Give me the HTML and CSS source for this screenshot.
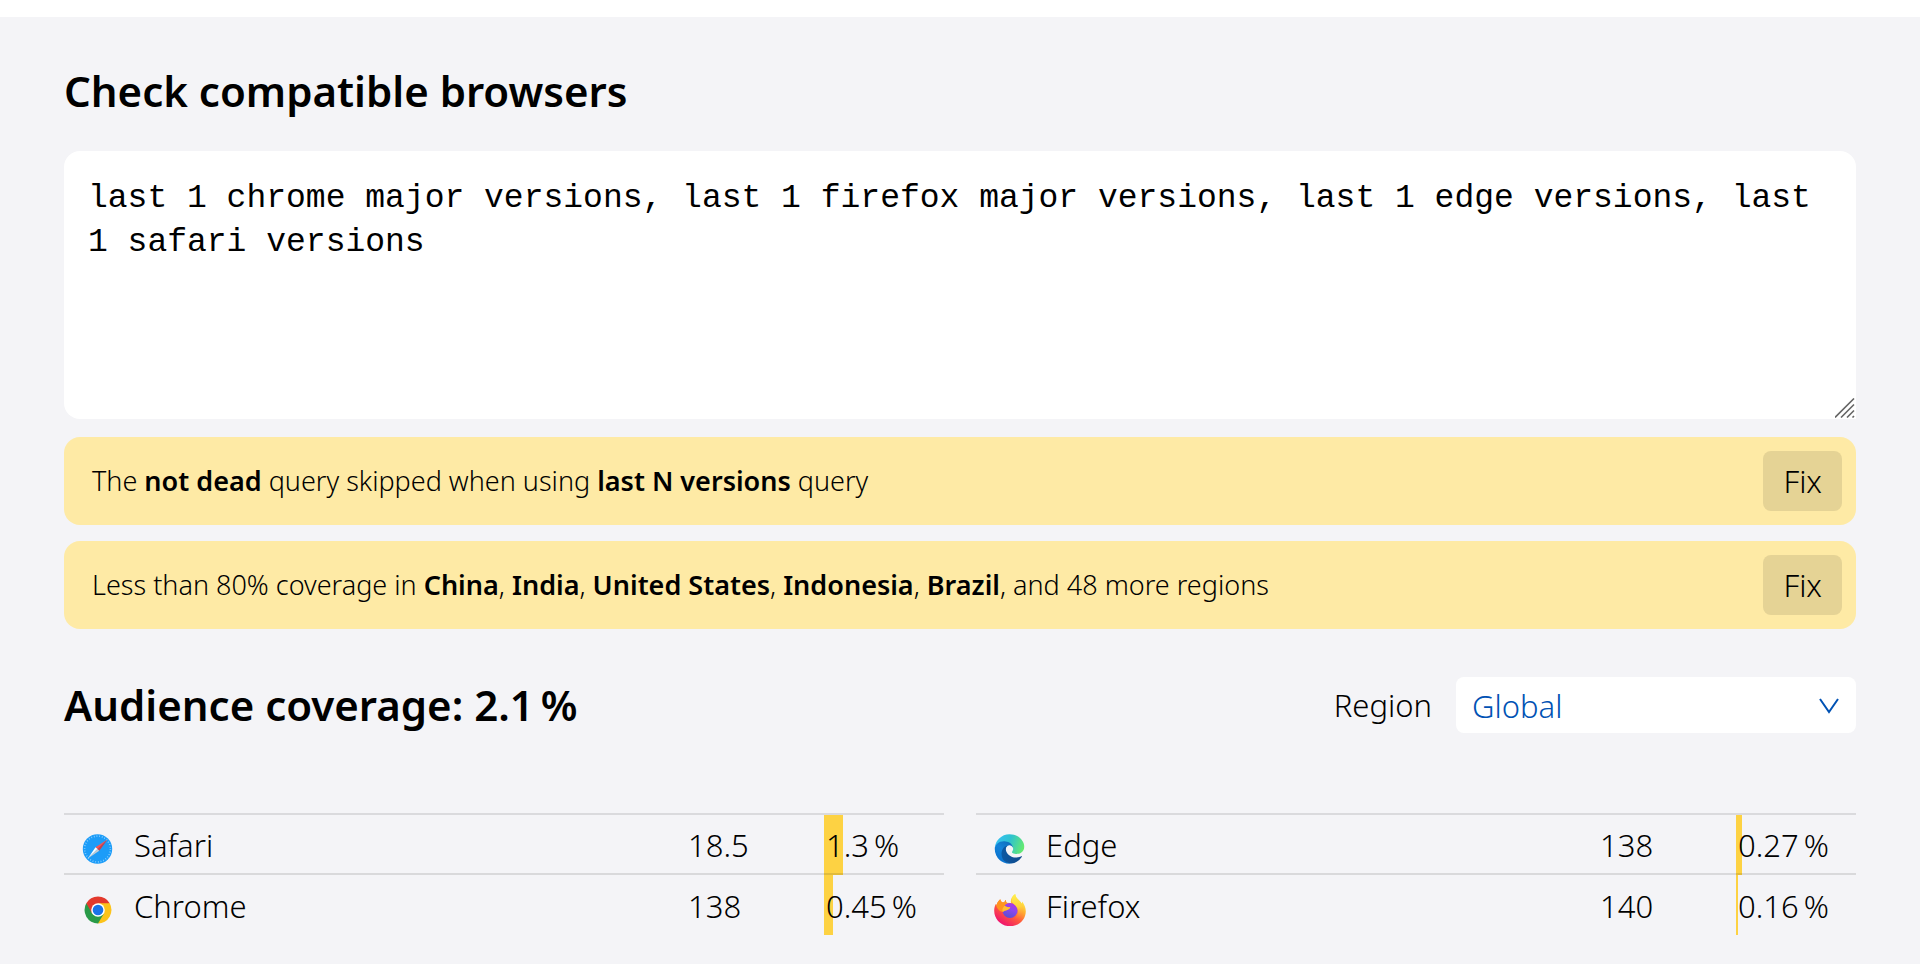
FILE: index.html
```
<!DOCTYPE html>
<html lang="en">
<head>
    <meta charset="UTF-8">
    <meta name="viewport" content="width=device-width, initial-scale=1.0">
    <title>Browserslist</title>
    <link rel="stylesheet" href="styles.css">
</head>
<body>
    <main class="page">
        <form class="query">
            <h1 class="title"><label for="query">Check compatible browsers</label></h1>

            <div class="query-box">
                <textarea id="query" class="query-text" name="q" spellcheck="false">last 1 chrome major versions, last 1 firefox major versions, last 1 edge versions, last 1 safari versions</textarea>
                <svg class="query-grip" viewBox="0 0 20 20" aria-hidden="true">
                    <path d="M0 19.5 19 .5M6 19.5 19 6.5M12 19.5 19 12.5M17.5 19.5 19 18" fill="none" stroke="#666" stroke-width="1.6"/>
                </svg>
            </div>

            <ul class="warnings">
                <li class="warning">
                    <p>The <strong>not dead</strong> query skipped when using <strong>last N versions</strong> query</p>
                    <button class="fix" type="button">Fix</button>
                </li>
                <li class="warning">
                    <p>Less than 80% coverage in <strong>China</strong>, <strong>India</strong>, <strong>United States</strong>, <strong>Indonesia</strong>, <strong>Brazil</strong>, and 48 more regions</p>
                    <button class="fix" type="button">Fix</button>
                </li>
            </ul>
        </form>

        <header class="coverage">
            <h2 class="title">Audience coverage: 2.1&#8239;%</h2>
            <div class="region">
                <label for="region">Region</label>
                <div class="select">
                    <select id="region" class="select-field" name="region">
                        <option>Global</option>
                    </select>
                    <svg class="select-arrow" viewBox="0 0 20 16" aria-hidden="true">
                        <path d="M1 1 10 14 19 1" fill="none" stroke="currentColor" stroke-width="2"/>
                    </svg>
                </div>
            </div>
        </header>

        <div class="stats">
            <table class="browsers" aria-label="Safari and Chrome coverage">
                <tbody>
                    <tr>
                        <th scope="row">
                            <div class="browser">
                                <svg class="icon" viewBox="0 0 32 32" aria-hidden="true">
                                    <circle cx="15.5" cy="16" r="14.7" fill="#1c9cf8"/>
                                    <circle cx="15.5" cy="16" r="12.9" fill="none" stroke="#8fd0ff" stroke-width="1.6" stroke-dasharray=".8 1.9"/>
                                    <path d="M25.5 6.5 13.5 14.2 15.5 16Z" fill="#ff5150"/>
                                    <path d="M25.5 6.5 17.3 17.8 15.5 16Z" fill="#d13c42"/>
                                    <path d="M5.8 25.6 13.5 14.2 15.5 16Z" fill="#fff"/>
                                    <path d="M5.8 25.6 17.3 17.8 15.5 16Z" fill="#c3ccd3"/>
                                </svg>
                                Safari
                            </div>
                        </th>
                        <td class="version">18.5</td>
                        <td class="share" style="background-size: 19px 100%">1.3&#8239;%</td>
                    </tr>
                    <tr>
                        <th scope="row">
                            <div class="browser">
                                <svg class="icon" viewBox="0 0 32 32" aria-hidden="true">
                                    <path d="M16 16 4.3 9.3A13.5 13.5 0 0 1 27.7 9.3Z" fill="#e3392d"/>
                                    <path d="M16 16 27.7 9.3A13.5 13.5 0 0 1 16 29.5Z" fill="#fcc31b"/>
                                    <path d="M16 16V29.5A13.5 13.5 0 0 1 4.3 9.3Z" fill="#299a48"/>
                                    <path d="M16 9.2H27.7L21.8 19.4Z" fill="#fcc31b"/>
                                    <path d="M21.9 19.4 16 29.5 14 20Z" fill="#299a48"/>
                                    <path d="M10.1 19.4 4.3 9.3 16 9.2Z" fill="#e3392d"/>
                                    <circle cx="16" cy="16" r="6.8" fill="#fff"/>
                                    <circle cx="16" cy="16" r="5.3" fill="#1a73e8"/>
                                </svg>
                                Chrome
                            </div>
                        </th>
                        <td class="version">138</td>
                        <td class="share" style="background-size: 9px 100%">0.45&#8239;%</td>
                    </tr>
                </tbody>
            </table>

            <table class="browsers" aria-label="Edge and Firefox coverage">
                <tbody>
                    <tr>
                        <th scope="row">
                            <div class="browser">
                                <svg class="icon" viewBox="0 0 278 278" aria-hidden="true">
                                    <defs>
                                        <linearGradient id="edge-dark" x1="60" y1="170" x2="240" y2="170" gradientUnits="userSpaceOnUse">
                                            <stop offset="0" stop-color="#0c59a4"/>
                                            <stop offset="1" stop-color="#114a8b"/>
                                        </linearGradient>
                                        <linearGradient id="edge-blue" x1="150" y1="90" x2="45" y2="220" gradientUnits="userSpaceOnUse">
                                            <stop offset="0" stop-color="#0f6fbd"/>
                                            <stop offset=".5" stop-color="#1383d9"/>
                                            <stop offset="1" stop-color="#0b74d0"/>
                                        </linearGradient>
                                        <linearGradient id="edge-green" x1="20" y1="60" x2="250" y2="140" gradientUnits="userSpaceOnUse">
                                            <stop offset="0" stop-color="#35c1f1"/>
                                            <stop offset=".45" stop-color="#2ec2cf"/>
                                            <stop offset="1" stop-color="#66eb6e"/>
                                        </linearGradient>
                                    </defs>
                                    <g transform="translate(2 6)">
                                        <path d="M110.3 246.3A79.2 79.2 0 0 1 87.6 225a80.7 80.7 0 0 1 29.5-120c3.1-1.5 8.5-4.1 15.6-4a32.4 32.4 0 0 1 25.7 13 31.9 31.9 0 0 1 6.3 18.7c0-.3 24.5-79.6-80-79.6-43.9 0-80 41.6-80 78.2a130.2 130.2 0 0 0 12.1 56 128 128 0 0 0 156.4 67.1 75.6 75.6 0 0 1-62.9-8Z" fill="url(#edge-blue)"/>
                                        <path d="M235.7 195.5a93.7 93.7 0 0 1-10.6 4.7 101.9 101.9 0 0 1-35.9 6.4c-47.3 0-88.5-32.5-88.5-74.3A31.5 31.5 0 0 1 117.1 105c-42.8 1.8-53.8 46.4-53.8 72.5 0 73.9 68.1 81.4 82.8 81.4 7.9 0 19.8-2.3 27-4.6l1.3-.4A128.3 128.3 0 0 0 241 201.1a4 4 0 0 0-5.3-5.6Z" fill="url(#edge-dark)"/>
                                        <path d="M156.9 153.8c-.8 1-3.3 2.5-3.3 5.6 0 2.6 1.7 5.2 4.8 7.3 14.3 10 41.4 8.6 41.5 8.6a59.6 59.6 0 0 0 30.3-8.3A61.4 61.4 0 0 0 260.6 114c.3-22.3-8-37.2-11.3-43.8C228.1 28.8 182.3 4.9 132.6 4.9a128 128 0 0 0-128 126.2c.5-36.5 36.8-66 80-66 3.5 0 23.5.3 42 10 16.3 8.6 24.9 19 30.8 29.3 6.2 10.6 7.3 24.1 7.3 29.5s-2.7 13.3-7.8 19.9Z" fill="url(#edge-green)"/>
                                    </g>
                                </svg>
                                Edge
                            </div>
                        </th>
                        <td class="version">138</td>
                        <td class="share" style="background-size: 6px 100%">0.27&#8239;%</td>
                    </tr>
                    <tr>
                        <th scope="row">
                            <div class="browser">
                                <svg class="icon" viewBox="0 0 32 32" aria-hidden="true">
                                    <defs>
                                        <linearGradient id="fox-body" x1="26" y1="4" x2="8" y2="30" gradientUnits="userSpaceOnUse">
                                            <stop offset="0" stop-color="#fff44f"/>
                                            <stop offset=".3" stop-color="#ffb02e"/>
                                            <stop offset=".6" stop-color="#ff5a3c"/>
                                            <stop offset="1" stop-color="#f0146e"/>
                                        </linearGradient>
                                        <linearGradient id="fox-flame" x1="21" y1="0" x2="24" y2="26" gradientUnits="userSpaceOnUse">
                                            <stop offset="0" stop-color="#fff04d"/>
                                            <stop offset=".5" stop-color="#ffd03c"/>
                                            <stop offset="1" stop-color="#ff7139" stop-opacity="0"/>
                                        </linearGradient>
                                        <linearGradient id="fox-globe" x1="19" y1="8" x2="13" y2="23" gradientUnits="userSpaceOnUse">
                                            <stop offset="0" stop-color="#b833e1"/>
                                            <stop offset=".5" stop-color="#8a46ee"/>
                                            <stop offset="1" stop-color="#5b4fd0"/>
                                        </linearGradient>
                                    </defs>
                                    <path d="M6.2 5.2C6.6 6.4 7.2 7.5 8 8.3c.8-.1 1.6 0 2.4.1C10.700 7 11.300 6.400 12 6c-.2 1 .1 2 .8 2.700L17 9c-.8-3.500 1-7 4.200-9 .3 3 1.800 4.600 4.200 6.700 1 .9 1.800 2 2.300 3.100l.4-2.400c2.300 3 3.700 6.200 3.700 9.900C31.800 25.700 24.900 32.200 16.200 32.200 7.500 32.200.2 25.600.2 16.700c0-2.500.6-4.800 1.800-6.900l.2 1.900C2.900 9.200 4.200 7 6.200 5.200Z" fill="url(#fox-body)"/>
                                    <circle cx="16" cy="16.500" r="7.600" fill="url(#fox-globe)"/>
                                    <path d="M21.200 0c.3 3 1.800 4.600 4.200 6.700 4 3.600 4.600 9.800 1.600 14.200-2.200 3.200-5.600 4.400-8.200 4.100 4.200-1.500 6.200-5.300 5-9.300-.9-3-2.800-4.700-4.500-6.200C16.500 7 17.500 2.800 21.200 0Z" fill="url(#fox-flame)"/>
                                    <path d="M6.200 5.200C6.600 6.400 7.200 7.500 8 8.300c.8-.1 1.600 0 2.400.1C10.700 7 11.300 6.400 12 6c-.2 1.200.2 2.300 1 3.100-1.300.6-2 1.500-2.300 2.600 1.500 1 3.300 1.500 5.600 1.500-.3 1.700-2 2.200-3.800 3.100-1.400.7-2.700.2-3.500 1.700-2.700-.2-5.500-2.800-6.800-6.300C2.900 9.200 4.200 7 6.200 5.200Z" fill="#ff9420"/>
                                    <path d="M9 18c.8-1.500 2.100-1 3.500-1.700 1.800-.9 3.500-1.400 3.800-3.100-2.300 0-4.100-.5-5.600-1.500-1.500 1.500-3.200 3.500-1.700 6.300Z" fill="#ffbd35"/>
                                </svg>
                                Firefox
                            </div>
                        </th>
                        <td class="version">140</td>
                        <td class="share" style="background-size: 2px 100%">0.16&#8239;%</td>
                    </tr>
                </tbody>
            </table>
        </div>
    </main>
</body>
</html>
```
FILE: styles.css
```
* {
    margin: 0;
    padding: 0;
    box-sizing: border-box;
}

body {
    padding-top: 17px;
    background: #fff;
    color: #000;
    font-family: "Noto Sans", "Open Sans", sans-serif;
    font-size: 31px;
    font-weight: 300;
    line-height: 40px;
}

.page {
    min-height: calc(100vh - 17px);
    padding: 46px 64px 29px;
    background: #f4f4f7;
}

.title {
    font-size: 42px;
    font-weight: 600;
    line-height: 56px;
}

.query-box {
    position: relative;
    margin-top: 32px;
}

.query-text {
    display: block;
    width: 100%;
    height: 268px;
    padding: 26px 24px;
    border: none;
    border-radius: 16px 16px 0 16px;
    outline: none;
    background: #fff;
    color: #000;
    font-family: "Liberation Mono", monospace;
    font-size: 33px;
    line-height: 44px;
    resize: none;
}

.query-grip {
    position: absolute;
    right: 1px;
    bottom: 1px;
    width: 20px;
    height: 20px;
}

.warnings {
    display: grid;
    gap: 16px;
    margin-top: 18px;
    list-style: none;
}

.warning {
    display: flex;
    align-items: center;
    justify-content: space-between;
    padding: 14px 14px 14px 28px;
    border-radius: 16px;
    background: #feeaa5;
    font-size: 27px;
}

.warning strong {
    font-weight: 600;
}

.fix {
    padding: 10px 20px;
    border: none;
    border-radius: 8px;
    background: #e5d395;
    color: inherit;
    font: inherit;
    font-size: 31px;
    cursor: pointer;
}

.fix:hover {
    background: #d8c78c;
}

.coverage {
    display: flex;
    align-items: center;
    justify-content: space-between;
    margin-top: 48px;
}

.region {
    display: flex;
    align-items: center;
    gap: 24px;
}

.select {
    position: relative;
    width: 400px;
    color: #0052b4;
}

.select-field {
    display: block;
    width: 100%;
    height: 56px;
    padding: 2px 48px 0 16px;
    border: none;
    border-radius: 8px;
    background: #fff;
    color: inherit;
    font: inherit;
    appearance: none;
}

.select-arrow {
    position: absolute;
    top: 21px;
    right: 17px;
    width: 20px;
    height: 16px;
    pointer-events: none;
}

.stats {
    display: grid;
    grid-template-columns: 1fr 1fr;
    gap: 32px;
    margin-top: 80px;
}

.browsers {
    width: 100%;
    border-top: 2px solid #dadadd;
    border-spacing: 0;
    table-layout: fixed;
}

.browsers th,
.browsers td {
    height: 60px;
    padding-top: 2px;
    font-weight: inherit;
    text-align: left;
}

.browsers tr:not(:last-child) > * {
    border-bottom: 2px solid rgba(0, 0, 0, 0.11);
}

.browser {
    display: flex;
    align-items: center;
    gap: 20px;
    padding-left: 18px;
}

.icon {
    width: 32px;
    height: 32px;
    margin-top: 8px;
}

.browsers .version {
    width: 136px;
}

.browsers .share {
    width: 120px;
    padding-left: 2px;
    background: linear-gradient(#fdd243, #fdd243) no-repeat border-box;
    white-space: nowrap;
}
```
